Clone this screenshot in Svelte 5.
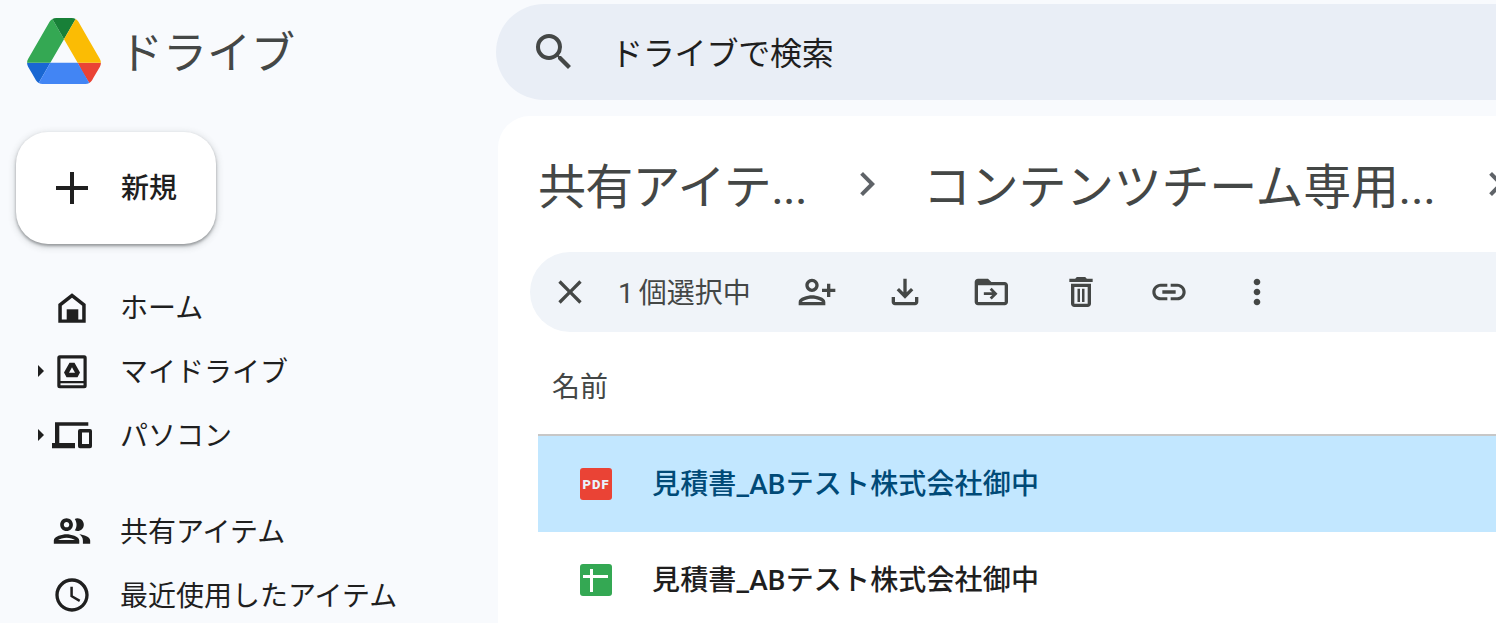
<script>
  const fileName = "見積書_ABテスト株式会社御中";
</script>

<div class="page">
  <aside class="sidebar">
    <div class="brand">
      <svg class="logo" viewBox="0 0 87.3 78" aria-hidden="true">
        <path d="m6.6 66.85 3.85 6.65c.8 1.4 1.95 2.5 3.3 3.3l13.75-23.8h-27.5c0 1.55.4 3.1 1.2 4.5z" fill="#1967d2"/>
        <path d="m43.65 25-13.75-23.8c-1.35.8-2.5 1.9-3.3 3.3l-25.4 44a9.06 9.06 0 0 0 -1.2 4.5h27.5z" fill="#34a853"/>
        <path d="m73.55 76.8c1.35-.8 2.5-1.9 3.3-3.3l1.6-2.75 7.65-13.25c.8-1.4 1.2-2.95 1.2-4.5h-27.502l5.852 11.5z" fill="#ea4335"/>
        <path d="m43.65 25 13.75-23.8c-1.35-.8-2.9-1.2-4.5-1.2h-18.5c-1.6 0-3.15.45-4.5 1.2z" fill="#188038"/>
        <path d="m59.8 53h-32.3l-13.75 23.8c1.35.8 2.9 1.2 4.5 1.2h50.8c1.6 0 3.15-.45 4.5-1.2z" fill="#4285f4"/>
        <path d="m73.4 26.5-12.7-22c-.8-1.4-1.95-2.5-3.3-3.3l-13.75 23.8 16.15 28h27.45c0-1.55-.4-3.1-1.2-4.5z" fill="#fbbc04"/>
      </svg>
      <span class="brand-name">ドライブ</span>
    </div>

    <button class="new-btn">
      <svg class="plus" viewBox="0 0 32 32" aria-hidden="true"><path d="M14 0h4v14h14v4H18v14h-4V18H0v-4h14z"/></svg>
      <span class="lift">新規</span>
    </button>

    <nav class="nav">
      <div class="nav-row">
        <span class="caret-slot"></span>
        <svg class="nav-icon" viewBox="0 0 40 40" aria-hidden="true">
          <path fill-rule="evenodd" d="M20 6.300 33.700 17V35.700H6.300V17zM20 10.800 9.800 18.800V32.500H30.200V18.800z"/>
          <path d="M14.700 22.300h11.600V34H14.700z"/>
        </svg>
        <span class="label">ホーム</span>
      </div>
      <div class="nav-row">
        <span class="caret-slot"><i class="caret"></i></span>
        <svg class="nav-icon" viewBox="0 0 40 40" aria-hidden="true">
          <path fill-rule="evenodd" d="M7.800 4.300h24.400a2.500 2.500 0 0 1 2.500 2.500v28a2.500 2.500 0 0 1-2.500 2.500H7.800a2.500 2.500 0 0 1-2.500-2.500v-28a2.500 2.500 0 0 1 2.500-2.500zM8.500 7.500V30H31.500V7.500zM8.500 32.200V34.200H31.500V32.200z"/>
          <path fill-rule="evenodd" d="M17.500 11.700h5l5.500 9.800-2.500 4.800H14.500L12 21.500zM20 16.300l-3 5.400h6z"/>
        </svg>
        <span class="label">マイドライブ</span>
      </div>
      <div class="nav-row">
        <span class="caret-slot"><i class="caret"></i></span>
        <svg class="nav-icon" viewBox="0 0 40 40" aria-hidden="true">
          <path d="M3 7.300H36.300V10.700H7.300V28H23V33.300H0V28H3z"/>
          <path fill-rule="evenodd" d="M28 14h10a2 2 0 0 1 2 2v15.300a2 2 0 0 1-2 2H28a2 2 0 0 1-2-2V16a2 2 0 0 1 2-2zM30 17.500V29H37V17.500z"/>
        </svg>
        <span class="label">パソコン</span>
      </div>
      <div class="nav-gap"></div>
      <div class="nav-row">
        <span class="caret-slot"></span>
        <svg class="nav-icon" viewBox="1 1 22 22" aria-hidden="true">
          <path d="M9 13.750c-2.340 0-7 1.170-7 3.500V19h14v-1.750c0-2.330-4.660-3.500-7-3.500zM4.340 17c.84-.58 2.870-1.250 4.660-1.250s3.820.67 4.660 1.250H4.340zM9 12c1.930 0 3.500-1.570 3.500-3.500S10.930 5 9 5 5.500 6.570 5.500 8.500 7.070 12 9 12zm0-5c.83 0 1.500.67 1.500 1.500S9.830 10 9 10s-1.500-.67-1.500-1.500S8.170 7 9 7zm7.040 6.810c1.160.84 1.960 1.960 1.960 3.440V19h4v-1.750c0-2.020-3.500-3.170-5.960-3.440zM15 12c1.930 0 3.500-1.570 3.500-3.500S16.930 5 15 5c-.54 0-1.040.13-1.500.35.63.89 1 1.980 1 3.150s-.37 2.260-1 3.150c.46.22.96.35 1.500.35z"/>
        </svg>
        <span class="label">共有アイテム</span>
      </div>
      <div class="nav-row">
        <span class="caret-slot"></span>
        <svg class="nav-icon" viewBox="0 0 24 24" aria-hidden="true">
          <path d="M11.990 2C6.470 2 2 6.480 2 12s4.470 10 9.990 10C17.520 22 22 17.520 22 12S17.520 2 11.990 2zM12 20c-4.420 0-8-3.580-8-8s3.580-8 8-8 8 3.580 8 8-3.580 8-8 8zm.5-13H11v6l5.250 3.150.75-1.230-4.500-2.670z"/>
        </svg>
        <span class="label">最近使用したアイテム</span>
      </div>
    </nav>
  </aside>

  <main class="content">
    <div class="search">
      <svg class="search-icon" viewBox="0 0 24 24" aria-hidden="true">
        <path d="M15.500 14h-.79l-.28-.27A6.471 6.471 0 0 0 16 9.500 6.500 6.500 0 1 0 9.500 16c1.610 0 3.090-.59 4.230-1.570l.27.28v.79l5 4.990L20.490 19l-4.990-5zm-6 0C7.010 14 5 11.990 5 9.500S7.010 5 9.500 5 14 7.010 14 9.500 11.990 14 9.500 14z"/>
      </svg>
      <span class="search-text">ドライブで検索</span>
    </div>

    <section class="panel">
      <div class="crumbs">
        <span class="crumb first">共有アイテ...</span>
        <svg class="chevron" viewBox="0 0 24 24" aria-hidden="true"><path d="M8.590 16.590 13.170 12 8.590 7.410 10 6l6 6-6 6z"/></svg>
        <span class="crumb">コンテンツチーム専用...</span>
        <svg class="chevron" viewBox="0 0 24 24" aria-hidden="true"><path d="M8.590 16.590 13.170 12 8.590 7.410 10 6l6 6-6 6z"/></svg>
      </div>

      <div class="toolbar">
        <svg class="tool close" viewBox="0 0 24 24" aria-hidden="true"><path d="M19 6.410 17.590 5 12 10.590 6.410 5 5 6.410 10.590 12 5 17.590 6.410 19 12 13.410 17.590 19 19 17.590 13.410 12z"/></svg>
        <span class="count"><span class="lift-sm">1 個選択中</span></span>
        <svg class="tool" viewBox="0 0 24 24" aria-hidden="true"><path transform="matrix(-1 0 0 1 24 0)" d="M15 12c2.210 0 4-1.790 4-4s-1.790-4-4-4-4 1.790-4 4 1.790 4 4 4zm0-6c1.100 0 2 .9 2 2s-.9 2-2 2-2-.9-2-2 .9-2 2-2zm0 8c-2.670 0-8 1.340-8 4v2h16v-2c0-2.660-5.330-4-8-4zm-6 4c.22-.72 3.310-2 6-2 2.700 0 5.800 1.290 6 2H9zm-3-3v-3h3v-2H6V7H4v3H1v2h3v3h2z"/></svg>
        <svg class="tool" viewBox="0 0 24 24" aria-hidden="true"><path d="M18 15v3H6v-3H4v3c0 1.100.9 2 2 2h12c1.100 0 2-.9 2-2v-3h-2zm-1-4-1.410-1.410L13 12.170V4h-2v8.170L8.410 9.590 7 11l5 5 5-5z"/></svg>
        <svg class="tool" viewBox="1 0 24 24" aria-hidden="true"><path d="M20 6h-8l-2-2H4c-1.100 0-1.990.9-1.990 2L2 18c0 1.100.9 2 2 2h16c1.100 0 2-.9 2-2V8c0-1.100-.9-2-2-2zm0 12H4V8h16v10z"/><path d="M12.200 9.500 11 10.700l1.500 1.500H7.500v1.600h5L11 15.300l1.200 1.200 3.500-3.500z"/></svg>
        <svg class="tool" viewBox="0 0 24 24" aria-hidden="true"><path d="M16 9v10H8V9h8m-1.500-6h-5l-1 1H5v2h14V4h-3.500l-1-1zM18 7H6v12c0 1.100.9 2 2 2h8c1.100 0 2-.9 2-2V7z"/><path d="M9.900 10h1.500v8H9.900zM12.600 10h1.500v8h-1.500z"/></svg>
        <svg class="tool" viewBox="0 0 24 24" aria-hidden="true"><path d="M3.900 12c0-1.710 1.390-3.100 3.100-3.100h4V7H7c-2.760 0-5 2.240-5 5s2.240 5 5 5h4v-1.900H7c-1.710 0-3.100-1.390-3.100-3.100zM8 13h8v-2H8v2zm9-6h-4v1.900h4c1.710 0 3.100 1.390 3.100 3.100s-1.390 3.100-3.100 3.100h-4V17h4c2.760 0 5-2.240 5-5s-2.240-5-5-5z"/></svg>
        <svg class="tool" viewBox="0 0 24 24" aria-hidden="true"><path d="M12 8c1.100 0 2-.9 2-2s-.9-2-2-2-2 .9-2 2 .9 2 2 2zm0 2c-1.100 0-2 .9-2 2s.9 2 2 2 2-.9 2-2-.9-2-2-2zm0 6c-1.100 0-2 .9-2 2s.9 2 2 2 2-.9 2-2-.9-2-2-2z"/></svg>
      </div>

      <div class="table">
        <div class="table-head">名前</div>
        <div class="file selected">
          <span class="file-icon pdf">PDF</span>
          <span class="file-name">{fileName}</span>
        </div>
        <div class="file">
          <span class="file-icon sheet"></span>
          <span class="file-name">{fileName}</span>
        </div>
      </div>
    </section>
  </main>
</div>

<style>
  :global(body) {
    background: #f8fafd;
  }

  .page {
    display: flex;
    height: 623px;
    overflow: hidden;
    font-family: "Roboto", "Noto Sans CJK JP", sans-serif;
    color: #1f1f1f;
    background: #f8fafd;
  }

  .sidebar {
    flex: 0 0 496px;
  }

  .brand {
    display: flex;
    align-items: center;
    height: 100px;
    padding-left: 27px;
  }

  .logo {
    width: 74px;
    height: 66px;
    margin-top: 2px;
  }

  .brand-name {
    margin-left: 18px;
    font-size: 44px;
    color: #444746;
  }

  .new-btn {
    display: flex;
    align-items: center;
    width: 200px;
    height: 112px;
    margin: 32px 0 0 16px;
    padding: 0 0 0 40px;
    border: none;
    border-radius: 32px;
    background: #fff;
    box-shadow: 0 2px 3px rgba(60, 64, 67, 0.45), 0 2px 6px 2px rgba(60, 64, 67, 0.15);
    font: 500 28px "Roboto", "Noto Sans CJK JP", sans-serif;
    color: #1f1f1f;
  }

  .lift {
    padding-bottom: 4px;
  }

  .plus {
    width: 32px;
    height: 32px;
    margin-right: 33px;
    fill: #1f1f1f;
  }

  .nav {
    margin-top: 31px;
  }

  .nav-row {
    display: flex;
    align-items: center;
    height: 64px;
    font-size: 28px;
  }

  .label {
    padding-bottom: 2px;
  }

  .nav-gap {
    height: 32px;
  }

  .caret-slot {
    display: flex;
    align-items: center;
    justify-content: flex-end;
    width: 46px;
    padding-right: 2px;
    box-sizing: border-box;
  }

  .caret {
    border-left: 6px solid #1f1f1f;
    border-top: 6px solid transparent;
    border-bottom: 6px solid transparent;
  }

  .nav-icon {
    width: 40px;
    height: 40px;
    margin: 0 28px 0 6px;
    fill: #1f1f1f;
  }

  .content {
    flex: 1;
    min-width: 0;
  }

  .search {
    display: flex;
    align-items: center;
    height: 96px;
    margin-top: 4px;
    padding-left: 34px;
    border-radius: 48px 0 0 48px;
    background: #e9eef6;
    font-size: 32px;
    color: #1f1f1f;
  }

  .search-text {
    padding-bottom: 2px;
    letter-spacing: -0.2px;
  }

  .search-icon {
    width: 48px;
    height: 48px;
    margin-right: 33px;
    fill: #444746;
  }

  .panel {
    height: 507px;
    margin: 16px 0 0 2px;
    border-radius: 32px 0 0 0;
    background: #fff;
    overflow: hidden;
  }

  .crumbs {
    display: flex;
    align-items: center;
    height: 136px;
    padding-left: 40px;
    white-space: nowrap;
  }

  .crumb {
    padding-bottom: 2px;
    font-size: 48px;
    letter-spacing: -0.3px;
    color: #444746;
  }

  .crumb.first {
    letter-spacing: -0.7px;
  }

  .chevron {
    flex: none;
    width: 48px;
    height: 48px;
    margin: 0 32px 0 36px;
    fill: #5f6368;
  }

  .toolbar {
    display: flex;
    align-items: center;
    height: 80px;
    margin-left: 32px;
    padding-left: 20px;
    border-radius: 40px 0 0 40px;
    background: #f0f4f9;
    color: #444746;
  }

  .tool {
    flex: none;
    width: 40px;
    height: 40px;
    margin-right: 48px;
    fill: #444746;
  }

  .tool.close {
    margin-right: 28px;
  }

  .count {
    width: 179px;
    font-size: 28px;
    font-weight: 400;
    word-spacing: -2px;
  }

  .lift-sm {
    display: block;
    padding-bottom: 2px;
  }

  .table {
    margin-left: 40px;
  }

  .table-head {
    display: flex;
    align-items: center;
    height: 98px;
    padding: 4px 0 0 14px;
    border-bottom: 2px solid #c7c7c7;
    font-size: 28px;
    font-weight: 400;
    color: #444746;
  }

  .file {
    display: flex;
    align-items: center;
    height: 96px;
    padding-left: 42px;
    font-size: 28px;
    font-weight: 500;
    letter-spacing: 0.15px;
  }

  .file-name {
    padding-bottom: 4px;
  }

  .file.selected {
    background: #c2e7ff;
    color: #004a77;
  }

  .file-icon {
    flex: none;
    display: flex;
    align-items: center;
    justify-content: center;
    position: relative;
    width: 32px;
    height: 32px;
    margin-right: 40px;
    border-radius: 3px;
  }

  .pdf {
    background: #ea4335;
    color: #e8f3fb;
    font: 900 13px "Roboto", sans-serif;
    letter-spacing: 1px;
  }

  .sheet {
    background: #34a853;
  }

  .sheet::before {
    content: "";
    position: absolute;
    left: 3px;
    right: 4px;
    top: 11px;
    height: 3px;
    background: #fff;
  }

  .sheet::after {
    content: "";
    position: absolute;
    left: 10px;
    top: 5px;
    bottom: 4px;
    width: 3px;
    background: #fff;
  }
</style>
